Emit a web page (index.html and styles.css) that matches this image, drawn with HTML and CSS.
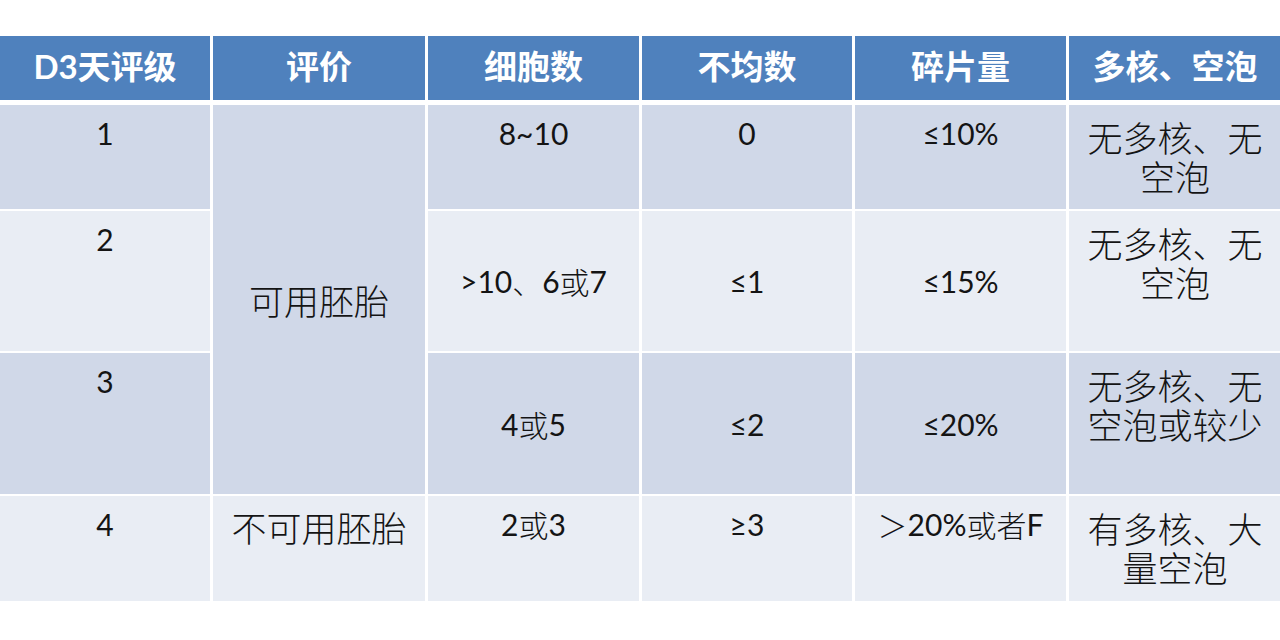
FILE: index.html
```html
<!DOCTYPE html>
<html lang="zh-CN">
<head>
<meta charset="utf-8">
<title>D3天评级</title>
<link rel="stylesheet" href="styles.css">
</head>
<body>
<div class="page">
  <div class="grade-table">
    <div class="th">D3天评级</div>
    <div class="th">评价</div>
    <div class="th">细胞数</div>
    <div class="th">不均数</div>
    <div class="th">碎片量</div>
    <div class="th">多核、空泡</div>

    <div class="td dark top">1</div>
    <div class="td dark mid merged zh">可用胚胎</div>
    <div class="td dark top">8~10</div>
    <div class="td dark top">0</div>
    <div class="td dark top">≤10%</div>
    <div class="td dark top zh note">无多核、无空泡</div>

    <div class="td light top">2</div>
    <div class="td light mid">&gt;10<span class="zh-in">、</span>6<span class="zh-in">或</span>7</div>
    <div class="td light mid">≤1</div>
    <div class="td light mid">≤15%</div>
    <div class="td light top zh note">无多核、无空泡</div>

    <div class="td dark top">3</div>
    <div class="td dark mid">4<span class="zh-in">或</span>5</div>
    <div class="td dark mid">≤2</div>
    <div class="td dark mid">≤20%</div>
    <div class="td dark top zh note">无多核、无空泡或较少</div>

    <div class="td light top">4</div>
    <div class="td light top zh">不可用胚胎</div>
    <div class="td light top">2<span class="zh-in">或</span>3</div>
    <div class="td light top">≥3</div>
    <div class="td light top"><span class="zh-in">＞</span>20%<span class="zh-in">或者</span>F</div>
    <div class="td light top zh note">有多核、大量空泡</div>
  </div>
</div>
</body>
</html>
```

FILE: styles.css
```css
html, body {
  margin: 0;
  padding: 0;
  background: #ffffff;
}

.page {
  width: 1280px;
  height: 640px;
  overflow: hidden;
  padding-top: 36px;
  box-sizing: border-box;
}

.grade-table {
  display: grid;
  grid-template-columns: 210px 212px 211px 210px 211px 212px;
  grid-template-rows: 67px 104px 140px 141px 105px;
  column-gap: 3px;
  row-gap: 2px;
  width: 1283px;
}

.th {
  background: #4f81bd;
  color: #ffffff;
  font-family: "Lato", "Noto Sans CJK SC", sans-serif;
  font-weight: 700;
  font-size: 33px;
  display: flex;
  align-items: center;
  justify-content: center;
  padding-bottom: 6px;
  margin-bottom: 3px;
  box-sizing: border-box;
  white-space: nowrap;
}

.td {
  font-family: "Lato", "Noto Sans CJK SC", sans-serif;
  font-size: 30px;
  line-height: 40px;
  color: #141414;
  display: flex;
  justify-content: center;
  text-align: center;
  padding: 0 6px;
  box-sizing: border-box;
}

.dark { background: #d0d8e8; }
.light { background: #e9edf4; }

.top {
  align-items: flex-start;
  padding-top: 8px;
}

.mid {
  align-items: center;
}

.merged {
  grid-row: span 3;
}

.zh {
  font-family: "Noto Sans CJK SC", sans-serif;
  font-size: 35px;
  font-weight: 300;
  line-height: 39px;
}

.zh.top {
  padding-top: 11px;
}

.zh.note {
  padding-top: 12px;
  padding-left: 4px;
  padding-right: 4px;
}

.zh-in {
  font-family: "Noto Sans CJK SC", sans-serif;
  font-weight: 300;
  font-size: 30px;
}
```
